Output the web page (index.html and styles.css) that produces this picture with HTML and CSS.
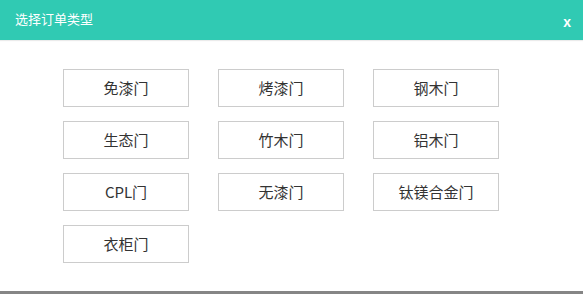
FILE: index.html
```html
<!DOCTYPE html>
<html lang="zh-CN">
<head>
<meta charset="utf-8">
<title>选择订单类型</title>
<link rel="stylesheet" href="styles.css">
</head>
<body>
<div class="dialog">
  <div class="header">
    <span class="title">选择订单类型</span>
    <span class="close">x</span>
  </div>
  <div class="body">
    <div class="grid">
      <div class="btn">免漆门</div>
      <div class="btn">烤漆门</div>
      <div class="btn">钢木门</div>
      <div class="btn">生态门</div>
      <div class="btn">竹木门</div>
      <div class="btn">铝木门</div>
      <div class="btn">CPL门</div>
      <div class="btn">无漆门</div>
      <div class="btn">钛镁合金门</div>
      <div class="btn">衣柜门</div>
    </div>
  </div>
  <div class="footer"></div>
</div>
</body>
</html>
```
FILE: styles.css
```css
html, body {
  margin: 0;
  padding: 0;
  background: #ffffff;
}
.dialog {
  width: 583px;
  height: 294px;
  display: flex;
  flex-direction: column;
  font-family: "Noto Sans CJK SC", "Noto Sans", sans-serif;
}
.header {
  height: 40px;
  background: #30cab3;
  display: flex;
  align-items: center;
  justify-content: space-between;
  padding: 0 12px 0 15px;
  color: #ffffff;
  box-shadow: 0 1px 1px rgba(0, 0, 0, 0.08);
}
.title {
  font-size: 13px;
  line-height: 16px;
  margin-top: -2px;
}
.close {
  font-size: 14px;
  font-weight: bold;
  line-height: 14px;
  margin-top: 4px;
  font-family: "Liberation Sans", sans-serif;
}
.body {
  flex: 1;
  padding: 29px 0 0 63px;
}
.grid {
  display: grid;
  grid-template-columns: repeat(3, 126px);
  grid-auto-rows: 38px;
  column-gap: 29px;
  row-gap: 14px;
}
.btn {
  box-sizing: border-box;
  border: 1px solid #cccccc;
  display: flex;
  align-items: center;
  justify-content: center;
  font-size: 15px;
  color: #333333;
  padding-bottom: 1px;
}
.footer {
  height: 3px;
  background: #858585;
}
```
